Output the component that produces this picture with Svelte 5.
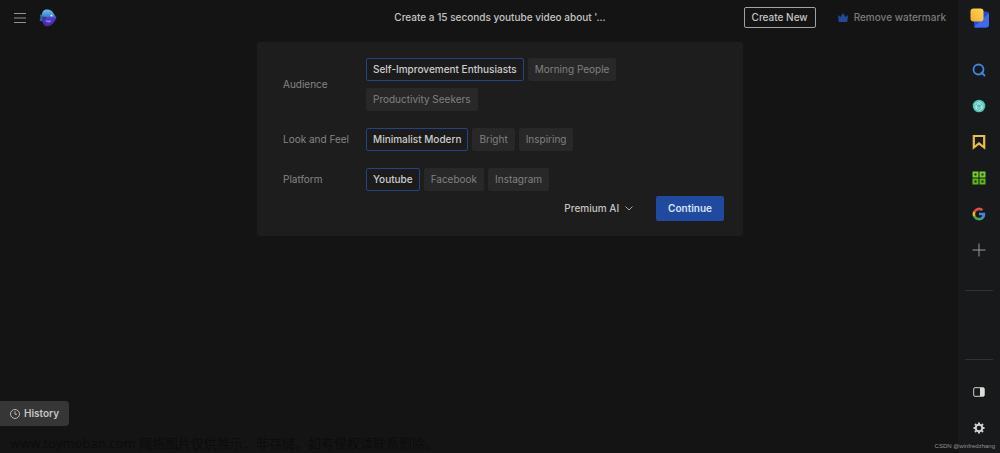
<script lang="ts">
  const groups = [
    { label: 'Audience', options: ['Self-Improvement Enthusiasts', 'Morning People', 'Productivity Seekers'] },
    { label: 'Look and Feel', options: ['Minimalist Modern', 'Bright', 'Inspiring'] },
    { label: 'Platform', options: ['Youtube', 'Facebook', 'Instagram'] },
  ];

  let selected = $state([0, 0, 0]);
</script>

<div class="page">
  <header>
    <div class="left">
      <button class="icon" aria-label="Menu">
        <svg width="12" height="10" viewBox="0 0 12 10" stroke="#929292" stroke-width="1">
          <path d="M0 .5h12M0 5h12M0 9.5h12" />
        </svg>
      </button>
      <a href="#home" class="logo" aria-label="Home">
        <svg width="18" height="18" viewBox="0 0 18 18">
          <defs>
            <linearGradient id="fish" x1="0" y1="0" x2="0" y2="1">
              <stop offset="0" stop-color="#6cc3e6" />
              <stop offset="0.38" stop-color="#4a83cd" />
              <stop offset="0.52" stop-color="#5439c4" />
              <stop offset="1" stop-color="#4328a6" />
            </linearGradient>
          </defs>
          <path d="M1 6C2.500 5 4 6 4 8.500S3 13 1.500 12L.5 10.500 1.500 9Z" fill="#28709f" />
          <path d="M3 7C2.500 3 4.500 .5 8 .5c3.500 0 5.500 1.500 7 4.500L17.500 9l-2.500 4c-1.500 3-5 4.700-8.500 4.200C3.500 15 2.500 11 3 7Z" fill="url(#fish)" />
          <path d="M3 7.500l5 1L4.500 11Z" fill="#243f7c" />
          <path d="M6.500 11.500h6c-1 2.500-5 2.500-6 0Z" fill="#917ee0" />
          <circle cx="12.500" cy="6.500" r="1" fill="#e2f3ff" />
        </svg>
      </a>
    </div>
    <h1>Create a 15 seconds youtube video about '...</h1>
    <div class="right">
      <button class="create">Create New</button>
      <button class="remove">
        <svg width="10" height="9" viewBox="0 0 10 9" fill="#204a9c">
          <path d="M0 2l2.500 2L5 0l2.500 4L10 2 9.300 9H.7Z" />
        </svg>
        Remove watermark
      </button>
    </div>
  </header>

  <main>
    {#each groups as group, g}
      <div class="group" role="group" aria-labelledby="group-{g}">
        <span class="label" id="group-{g}">{group.label}</span>
        <div class="chips">
          {#each group.options as option, i}
            <button
              class="chip"
              class:on={selected[g] === i}
              aria-pressed={selected[g] === i}
              onclick={() => (selected[g] = i)}
            >{option}</button>
          {/each}
        </div>
      </div>
    {/each}
    <div class="actions">
      <button class="model">
        Premium AI
        <svg width="8" height="5" viewBox="0 0 8 5" fill="none" stroke="#aaa"><path d="M.5 .5L4 4 7.500 .5" /></svg>
      </button>
      <button class="continue">Continue</button>
    </div>
  </main>

  <button class="history">
    <svg width="10" height="10" viewBox="0 0 10 10" fill="none" stroke="#b5b5b5">
      <circle cx="5" cy="5" r="4.500" />
      <path d="M5 2.300v3h2" />
    </svg>
    History
  </button>

  <p class="notice">www.toymoban.com 网络图片仅供展示，非存储，如有侵权请联系删除。</p>

  <aside>
    <a href="#profile" class="profile" aria-label="Profile">
      <svg width="20" height="20" viewBox="0 0 20 20">
        <defs>
          <linearGradient id="amber" x1="0" y1="1" x2="1" y2="0">
            <stop offset="0" stop-color="#f3a935" />
            <stop offset="1" stop-color="#ffdc48" />
          </linearGradient>
        </defs>
        <rect x="5" y="3.500" width="15" height="16" rx="3" fill="#2548d8" />
        <path d="M5 19L20 5v11.500a3 3 0 0 1-3 3H8a3 3 0 0 1-3-.5Z" fill="#3e6aeb" />
        <rect x="1.500" y=".5" width="13" height="13" rx="3" fill="url(#amber)" />
      </svg>
    </a>
    <nav>
      <a href="#search" aria-label="Search">
        <svg width="14" height="14" viewBox="0 0 14 14" fill="none" stroke="#4384e8" stroke-width="1.800">
          <circle cx="6.500" cy="6.500" r="5" />
          <path d="M9 9l4 4" />
        </svg>
      </a>
      <a href="#assistant" aria-label="Assistant">
        <svg width="14" height="14" viewBox="0 0 14 14" fill="none">
          <circle cx="7" cy="7" r="6.300" fill="#4dc1b3" />
          <g stroke="#b4eee5" stroke-width=".8">
            <path d="M7 2.500l3.900 2.200v4.600L7 11.500 3.100 9.300V4.700Z" />
            <path d="M5 3.600l4.500 2.700v4M9 3.600L4.500 6.300v4M3.500 7.400L7 9.400l3.500-2" />
          </g>
        </svg>
      </a>
      <a href="#bookmarks" aria-label="Bookmarks">
        <svg width="14" height="16" viewBox="0 0 14 16" fill="none" stroke="#ebbd40" stroke-width="2.200">
          <path d="M1.800 2h10.400v11.500L7 9.500l-5.200 4Z" />
        </svg>
      </a>
      <a href="#apps" aria-label="Apps">
        <svg width="14" height="14" viewBox="0 0 14 14" fill="#182a0d" stroke="#79ca30" stroke-width="2">
          <path d="M1.500 1.500h4v4h-4ZM8.500 1.500h4v4h-4Z" />
          <path d="M1.500 8.500h4v4h-4ZM8.500 8.500h4v4h-4Z" stroke="#60b520" />
        </svg>
      </a>
      <a href="#google" aria-label="Google">
        <svg width="14" height="14" viewBox="0 0 24 24">
          <path fill="#4285e8" d="M22.600 12.300c0-.8-.1-1.500-.2-2.300H12v4.300h5.900a5 5 0 0 1-2.200 3.300v2.800h3.600c2.100-1.900 3.300-4.800 3.300-8.100Z" />
          <path fill="#43a557" d="M12 23c3 0 5.500-1 7.300-2.700l-3.600-2.700c-1 .6-2.200 1-3.700 1a6.600 6.600 0 0 1-6.200-4.500H2.200v2.800A11 11 0 0 0 12 23Z" />
          <path fill="#efb82d" d="M5.800 14.100a6.600 6.600 0 0 1 0-4.200V7.100H2.200a11 11 0 0 0 0 9.800Z" />
          <path fill="#e24f42" d="M12 5.400c1.600 0 3 .6 4.200 1.600l3.200-3.100A11 11 0 0 0 2.200 7.100l3.600 2.800A6.600 6.600 0 0 1 12 5.400Z" />
        </svg>
      </a>
      <button class="icon" aria-label="Add">
        <svg width="14" height="14" viewBox="0 0 14 14" stroke="#9a9b9d"><path d="M7 .5v13M.5 7h13" /></svg>
      </button>
    </nav>
    <div class="slot"></div>
    <div class="tools">
      <button class="icon" aria-label="Toggle side panel">
        <svg width="12" height="10" viewBox="0 0 12 10">
          <rect x=".7" y=".7" width="10.600" height="8.600" rx="1.200" fill="none" stroke="#d0d0d0" />
          <path d="M7 1h4v8H7Z" fill="#deded9" />
        </svg>
      </button>
      <button class="icon" aria-label="Settings">
        <svg width="12" height="12" viewBox="0 0 12 12" fill="none" stroke="#ced2d4">
          <circle cx="6" cy="6" r="3.300" stroke-width="2" />
          <path d="M6 .5v2M6 9.500v2M.5 6h2M9.500 6h2M2 2l1.200 1.200M8.800 8.800L10 10M2 10l1.200-1.200M8.800 3.200L10 2" stroke-width="2" />
        </svg>
      </button>
    </div>
  </aside>

  <small class="credit">CSDN @winfredzhang</small>
</div>

<style>
  :global(body) {
    margin: 0;
    background: #141414;
  }
  .page {
    position: relative;
    display: flex;
    flex-direction: column;
    min-height: 100vh;
    color: #c4c4c4;
    font: 500 10px/15px Inter, 'Noto Sans CJK SC', sans-serif;
  }
  button {
    margin: 0;
    padding: 0;
    border: 0;
    background: none;
    color: inherit;
    font: inherit;
    cursor: pointer;
  }
  svg {
    display: block;
    flex: none;
  }
  .icon {
    display: grid;
    place-items: center;
  }

  header {
    display: grid;
    grid-template-columns: 1fr auto 1fr;
    align-items: center;
    height: 35px;
    margin-bottom: 7px;
  }
  .left,
  .right {
    display: flex;
    align-items: center;
  }
  .left {
    gap: 13px;
    padding-left: 14px;
  }
  .right {
    justify-content: flex-end;
    gap: 22px;
    padding-right: 54px;
  }
  h1 {
    margin: 0;
    font-size: 10px;
    font-weight: 500;
  }
  .create {
    height: 21px;
    padding: 0 7px;
    border: 1px solid #a2a2a2;
    border-radius: 2px;
  }
  .remove {
    display: flex;
    align-items: center;
    gap: 6px;
    color: #7b7b7b;
  }

  main {
    display: flex;
    flex-direction: column;
    gap: 17px;
    box-sizing: border-box;
    width: 100%;
    max-width: 486px;
    margin: 0 auto;
    padding: 16px 19px 15px 26px;
    border-radius: 3px;
    background: #1d1d1d;
  }
  .group {
    display: grid;
    grid-template-columns: 83px 1fr;
    align-items: center;
  }
  .label {
    color: #858585;
    font-weight: 400;
  }
  .chips {
    display: flex;
    flex-wrap: wrap;
    gap: 7px 4px;
    padding-right: 80px;
  }
  .chip {
    height: 23px;
    padding: 0 6px;
    border: 1px solid #282828;
    border-radius: 2px;
    background: #282828;
    color: #808080;
    font-weight: 400;
  }
  .chip.on {
    border-color: #244485;
    background: #1b1b1c;
    color: #cdcdcd;
    font-weight: 500;
  }
  .actions {
    display: flex;
    justify-content: flex-end;
    align-items: center;
    gap: 23px;
    margin-top: -12px;
  }
  .model {
    display: flex;
    align-items: center;
    gap: 6px;
  }
  .continue {
    height: 25px;
    padding: 0 12px;
    border-radius: 2px;
    background: #2049a0;
    color: #dce4f4;
    font-weight: 600;
  }

  .history {
    display: flex;
    align-items: center;
    align-self: flex-start;
    gap: 4px;
    height: 25px;
    margin-top: auto;
    padding: 0 10px;
    border-radius: 0 4px 4px 0;
    background: #363636;
    font-weight: 600;
  }
  .notice {
    margin: 8px 0 0 10px;
    color: #0c0c0c;
    font: 13px/19px 'Noto Sans', 'Noto Sans CJK SC', sans-serif;
  }

  aside {
    position: absolute;
    inset: 0 0 0 auto;
    display: flex;
    flex-direction: column;
    align-items: center;
    box-sizing: border-box;
    width: 42px;
    padding: 8px 0 16px;
    background: #18191b;
  }
  nav {
    display: flex;
    flex-direction: column;
    gap: 12px;
    margin-top: 30px;
  }
  nav > * {
    display: grid;
    place-items: center;
    height: 24px;
  }
  .slot {
    flex: 1;
    width: 28px;
    margin: 28px 0 23px;
    border: solid #313234;
    border-width: 1px 0;
  }
  .tools {
    display: flex;
    flex-direction: column;
    gap: 18px;
  }
  .tools .icon {
    height: 18px;
  }
  .credit {
    position: absolute;
    right: 5px;
    bottom: 2px;
    color: #949494;
    font: 6px/10px 'Liberation Sans', sans-serif;
  }
</style>
